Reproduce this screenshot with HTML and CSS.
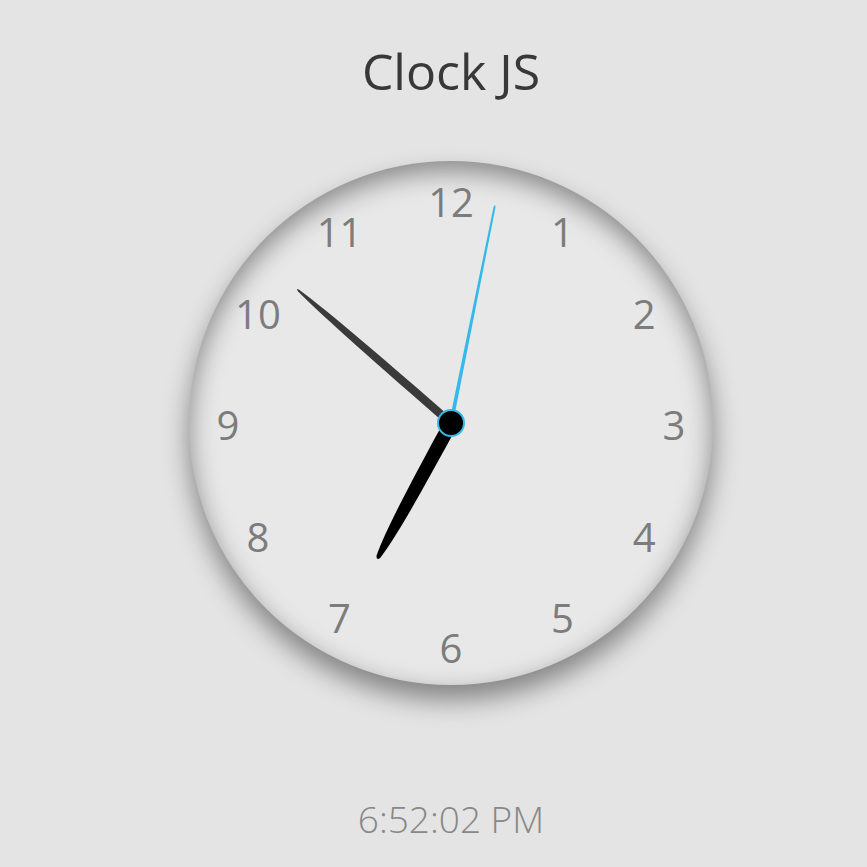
FILE: index.html
```html
<!DOCTYPE html>
<html lang="en">
<head>
<meta charset="utf-8">
<title>Clock JS</title>
<link rel="stylesheet" href="styles.css">
</head>
<body>
<main class="page">
  <h1 class="title">Clock JS</h1>
  <div class="clock">
    <span class="num n1">1</span>
    <span class="num n2">2</span>
    <span class="num n3">3</span>
    <span class="num n4">4</span>
    <span class="num n5">5</span>
    <span class="num n6">6</span>
    <span class="num n7">7</span>
    <span class="num n8">8</span>
    <span class="num n9">9</span>
    <span class="num n10">10</span>
    <span class="num n11">11</span>
    <span class="num n12">12</span>
    <svg class="hands" viewBox="0 0 524 524" width="524" height="524" aria-hidden="true">
      <g transform="translate(262 262)">
        <path class="hour" transform="rotate(208.5)" d="M -7 0 C -7 -70 -6.5 -125 -2.2 -152 Q 0 -157 2.2 -152 C 6.5 -125 7 -70 7 0 Z"/>
        <path class="minute" transform="rotate(311)" d="M -4.2 0 C -4.2 -90 -3.8 -165 -1 -202 Q 0 -206 1 -202 C 3.8 -165 4.2 -90 4.2 0 Z"/>
        <path class="second" transform="rotate(11.4)" d="M -1.9 0 L -1 -220 Q 0 -225 1 -220 L 1.9 0 Z"/>
        <circle class="pin" cx="0" cy="0" r="13"/>
      </g>
    </svg>
  </div>
  <p class="time">6:52:02 PM</p>
</main>
</body>
</html>
```

FILE: styles.css
```css
html, body {
  margin: 0;
  padding: 0;
  background: #e4e4e4;
}

body {
  font-family: "Open Sans", "Noto Sans", sans-serif;
}

.page {
  box-sizing: border-box;
  width: 867px;
  padding-left: 35px;
  display: flex;
  flex-direction: column;
  align-items: center;
}

.title {
  margin: 0;
  padding-top: 46px;
  font-size: 50px;
  line-height: 50px;
  font-weight: 400;
  color: #383838;
}

.clock {
  position: relative;
  margin-top: 65px;
  width: 524px;
  height: 524px;
  border-radius: 50%;
  background: #e8e8e8;
  box-shadow: 0 15px 26px rgba(0, 0, 0, 0.42), inset 0 10px 26px rgba(0, 0, 0, 0.42);
}

.num {
  position: absolute;
  width: 60px;
  height: 40px;
  line-height: 40px;
  text-align: center;
  font-size: 40px;
  color: #7c7c7c;
  transform: translate(-50%, -50%);
}

.n1 { left: 373.5px; top: 71.2px; }
.n2 { left: 455.1px; top: 152.8px; }
.n3 { left: 485px; top: 264.3px; }
.n4 { left: 455.1px; top: 375.8px; }
.n5 { left: 373.5px; top: 457.4px; }
.n6 { left: 262px; top: 487.3px; }
.n7 { left: 150.5px; top: 457.4px; }
.n8 { left: 68.9px; top: 375.8px; }
.n9 { left: 39px; top: 264.3px; }
.n10 { left: 68.9px; top: 152.8px; }
.n11 { left: 150.5px; top: 71.2px; }
.n12 { left: 262px; top: 41.2px; }

.hands {
  position: absolute;
  left: 0;
  top: 0;
}

.hour { fill: #000; }
.minute { fill: #3a3a3a; }
.second { fill: #35b9ea; }
.pin {
  fill: #000;
  stroke: #35b9ea;
  stroke-width: 2;
}

.time {
  margin: 115px 0 0;
  font-size: 37px;
  line-height: 37px;
  font-weight: 300;
  color: #888;
}
```
